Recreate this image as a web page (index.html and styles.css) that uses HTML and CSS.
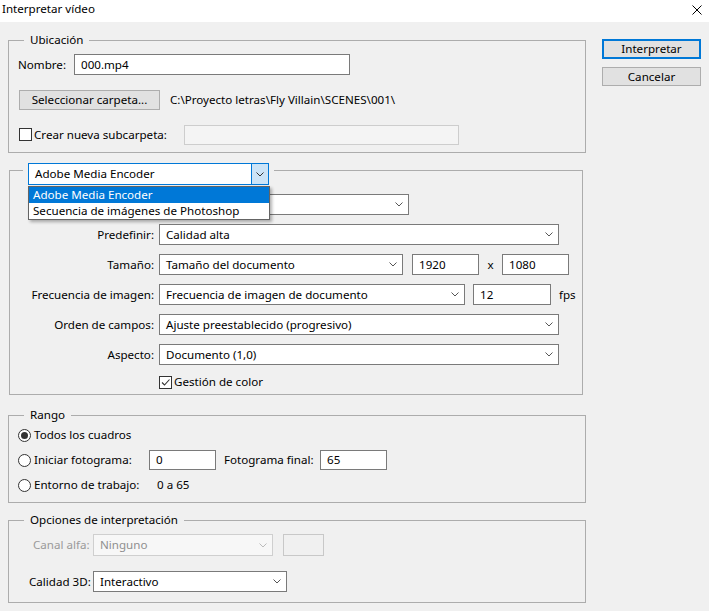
FILE: index.html
```html
<!DOCTYPE html>
<html lang="es">
<head>
<meta charset="utf-8">
<title>Interpretar vídeo</title>
<link rel="stylesheet" href="styles.css">
</head>
<body>
<div class="titlebar">
  <span class="title">Interpretar vídeo</span>
  <svg class="close" viewBox="0 0 10 10" width="10" height="10"><path d="M0.5 0.5 L9.5 9.5 M9.5 0.5 L0.5 9.5" stroke="#000" stroke-width="1" fill="none"/></svg>
</div>
<div class="dialog">
  <div class="main">
    <fieldset class="group g-ubic">
      <legend>Ubicación</legend>
      <div class="row">
        <span class="lbl-nombre">Nombre:</span>
        <div class="input w-nombre">000.mp4</div>
      </div>
      <div class="row gap-row">
        <button class="btn btn-folder" type="button">Seleccionar carpeta...</button>
        <span class="path">C:\Proyecto letras\Fly Villain\SCENES\001\</span>
      </div>
      <div class="row gap-row">
        <span class="check check-sub"></span>
        <span class="lbl-sub">Crear nueva subcarpeta:</span>
        <div class="input disabled w-sub"></div>
      </div>
    </fieldset>

    <div class="group g-video">
      <div class="combo-wrap">
        <div class="combo">
          <span class="combo-text">Adobe Media Encoder</span>
          <span class="combo-arrow"><svg class="chev" viewBox="0 0 8 5" width="8" height="5"><path d="M0.5 0.5 L4 4 L7.5 0.5" stroke="#333" fill="none"/></svg></span>
        </div>
        <ul class="dropdown">
          <li class="sel">Adobe Media Encoder</li>
          <li>Secuencia de imágenes de Photoshop</li>
        </ul>
      </div>
      <div class="vgrid">
        <span class="vlbl"></span>
        <div class="field"><div class="select w-format"><span></span><svg class="chev" viewBox="0 0 8 5" width="8" height="5"><path d="M0.5 0.5 L4 4 L7.5 0.5" stroke="#555" fill="none"/></svg></div></div>

        <span class="vlbl">Predefinir:</span>
        <div class="field"><div class="select w-full"><span>Calidad alta</span><svg class="chev" viewBox="0 0 8 5" width="8" height="5"><path d="M0.5 0.5 L4 4 L7.5 0.5" stroke="#555" fill="none"/></svg></div></div>

        <span class="vlbl">Tamaño:</span>
        <div class="field">
          <div class="select w-size"><span>Tamaño del documento</span><svg class="chev" viewBox="0 0 8 5" width="8" height="5"><path d="M0.5 0.5 L4 4 L7.5 0.5" stroke="#555" fill="none"/></svg></div>
          <div class="input w-dim dim-first">1920</div>
          <span class="times">x</span>
          <div class="input w-dim">1080</div>
        </div>

        <span class="vlbl">Frecuencia de imagen:</span>
        <div class="field">
          <div class="select w-rate"><span>Frecuencia de imagen de documento</span><svg class="chev" viewBox="0 0 8 5" width="8" height="5"><path d="M0.5 0.5 L4 4 L7.5 0.5" stroke="#555" fill="none"/></svg></div>
          <div class="input w-fps">12</div>
          <span class="fps">fps</span>
        </div>

        <span class="vlbl">Orden de campos:</span>
        <div class="field"><div class="select w-full"><span>Ajuste preestablecido (progresivo)</span><svg class="chev" viewBox="0 0 8 5" width="8" height="5"><path d="M0.5 0.5 L4 4 L7.5 0.5" stroke="#555" fill="none"/></svg></div></div>

        <span class="vlbl">Aspecto:</span>
        <div class="field"><div class="select w-full"><span>Documento (1,0)</span><svg class="chev" viewBox="0 0 8 5" width="8" height="5"><path d="M0.5 0.5 L4 4 L7.5 0.5" stroke="#555" fill="none"/></svg></div></div>

        <span></span>
        <div class="field">
          <span class="check checked"><svg viewBox="0 0 11 11" width="11" height="11"><path d="M2 5.5 L4.5 8 L9.5 2.5" stroke="#333" stroke-width="1.1" fill="none"/></svg></span>
          <span class="check-lbl">Gestión de color</span>
        </div>
      </div>
    </div>

    <fieldset class="group g-rango">
      <legend>Rango</legend>
      <div class="rrow">
        <span class="radio on"></span>
        <span class="rlbl">Todos los cuadros</span>
      </div>
      <div class="rrow">
        <span class="radio"></span>
        <span class="rlbl w-ini">Iniciar fotograma:</span>
        <div class="input w-dim h20">0</div>
        <span class="lbl-final">Fotograma final:</span>
        <div class="input w-dim h20">65</div>
      </div>
      <div class="rrow">
        <span class="radio"></span>
        <span class="rlbl w-ent">Entorno de trabajo:</span>
        <span>0 a 65</span>
      </div>
    </fieldset>

    <fieldset class="group g-opc">
      <legend>Opciones de interpretación</legend>
      <div class="ogrid">
        <span class="olbl dis lbl-alfa">Canal alfa:</span>
        <div class="field">
          <div class="select disabled w-alfa"><span>Ninguno</span><svg class="chev" viewBox="0 0 8 5" width="8" height="5"><path d="M0.5 0.5 L4 4 L7.5 0.5" stroke="#bbb" fill="none"/></svg></div>
          <div class="swatch"></div>
        </div>
        <span class="olbl lbl-3d">Calidad 3D:</span>
        <div class="field"><div class="select w-3d"><span>Interactivo</span><svg class="chev" viewBox="0 0 8 5" width="8" height="5"><path d="M0.5 0.5 L4 4 L7.5 0.5" stroke="#555" fill="none"/></svg></div></div>
      </div>
    </fieldset>
  </div>

  <div class="side">
    <button class="btn btn-side btn-primary" type="button">Interpretar</button>
    <button class="btn btn-side btn-cancel" type="button">Cancelar</button>
  </div>
</div>
</body>
</html>
```

FILE: styles.css
```css
html, body {
  margin: 0;
  padding: 0;
}
body {
  width: 709px;
  height: 611px;
  overflow: hidden;
  background: #f0f0f0;
  font-family: "Noto Sans", "Open Sans", sans-serif;
  font-size: 11.6px;
  line-height: 16px;
  color: #000;
}

/* title bar */
.titlebar {
  height: 22px;
  background: #fff;
  display: flex;
  justify-content: space-between;
  align-items: flex-start;
}
.title {
  padding-left: 2px;
  line-height: 17px;
}
.close {
  margin: 5px 7px 0 0;
  display: block;
}

/* layout */
.dialog {
  display: flex;
  padding-top: 10px;
}
.main {
  margin-left: 8px;
  width: 578px;
  display: flex;
  flex-direction: column;
}
.side {
  margin-left: 16px;
  margin-top: 7px;
  display: flex;
  flex-direction: column;
  gap: 8px;
}

/* group boxes */
fieldset.group {
  margin: 0;
  min-width: 0;
  border: 1px solid #acacac;
  box-sizing: border-box;
}
fieldset.group legend {
  margin-left: 6px;
  padding: 0 6px;
  line-height: 16px;
  height: 16px;
}
.g-ubic {
  padding: 6px 8px 7px 9px;
}
.g-rango {
  margin-top: 12px !important;
  padding: 2px 8px 7px 9px;
}
.g-opc {
  margin-top: 9px !important;
  padding: 6px 8px 10px 9px;
}
.g-opc legend {
  margin-left: 4px;
}

.row {
  display: flex;
  align-items: center;
  height: 21px;
}
.gap-row {
  margin-top: 14px;
}
.lbl-nombre {
  width: 56px;
}
.lbl-sub {
  width: 150px;
  margin-left: 2px;
}
.path {
  margin-left: 10px;
}

/* controls */
.input {
  box-sizing: border-box;
  height: 21px;
  border: 1px solid #7a7a7a;
  background: #fff;
  padding-left: 6px;
  display: flex;
  align-items: center;
  white-space: nowrap;
}
.input.disabled {
  background: #f4f4f4;
  border-color: #cdcdcd;
  height: 20px;
}
.h20 {
  height: 20px;
}
.w-nombre { width: 276px; }
.w-sub { width: 275px; }
.w-dim { width: 67px; }
.w-fps { width: 78px; margin-left: 8px; }
.dim-first { margin-left: 9px; }
.times {
  width: 23px;
  text-align: center;
}
.fps {
  margin-left: 8px;
}

.select {
  box-sizing: border-box;
  height: 21px;
  border: 1px solid #7a7a7a;
  background: #fff;
  display: flex;
  align-items: center;
  justify-content: space-between;
  padding: 0 5px 0 6px;
  white-space: nowrap;
}
.select.disabled {
  background: #f7f7f7;
  border-color: #cfcfcf;
  color: #8f8f8f;
  height: 22px;
}
.chev {
  display: block;
  flex: none;
}
.w-format { width: 250px; }
.w-full { width: 400px; }
.w-size { width: 244px; }
.w-rate { width: 306px; }
.w-alfa { width: 180px; }
.w-3d { width: 194px; }

.swatch {
  box-sizing: border-box;
  width: 41px;
  height: 22px;
  margin-left: 10px;
  border: 1px solid #c8c8c8;
  background: #f0f0f0;
}

.btn {
  box-sizing: border-box;
  height: 20px;
  margin: 0;
  padding: 0;
  border: 1px solid #adadad;
  background: #e1e1e1;
  font: inherit;
  color: #000;
}
.btn-folder {
  width: 141px;
  margin-left: 1px;
}
.btn-side {
  width: 99px;
}
.btn-primary {
  border: 2px solid #0078d7;
}
.btn-cancel {
  height: 19px;
}

.check {
  box-sizing: border-box;
  width: 13px;
  height: 13px;
  border: 1px solid #333;
  background: #fff;
  display: flex;
  align-items: center;
  justify-content: center;
  flex: none;
}
.check svg {
  display: block;
}
.check-sub {
  margin-left: 1px;
}
.check-lbl {
  margin-left: 2px;
}

/* video group */
.g-video {
  margin-top: 17px;
  margin-left: 1px;
  width: 574px;
  box-sizing: border-box;
  border: 1px solid #acacac;
  padding-bottom: 4px;
}
.combo-wrap {
  position: relative;
  width: max-content;
  margin: -8px 0 0 13px;
  padding: 0 5px;
  background: #f0f0f0;
}
.combo {
  box-sizing: border-box;
  width: 241px;
  height: 22px;
  border: 1px solid #0078d7;
  background: #fff;
  display: flex;
  align-items: stretch;
}
.combo-text {
  flex: 1;
  padding-left: 6px;
  display: flex;
  align-items: center;
}
.combo-arrow {
  width: 17px;
  box-sizing: border-box;
  background: #cce4f7;
  border-left: 1px solid #0078d7;
  display: flex;
  align-items: center;
  justify-content: center;
}
.dropdown {
  position: absolute;
  left: 5px;
  top: 23px;
  z-index: 2;
  box-sizing: border-box;
  width: 242px;
  margin: 0;
  padding: 0;
  list-style: none;
  border: 1px solid #646464;
  background: #fff;
  box-shadow: 2px 2px 3px rgba(0, 0, 0, 0.3);
}
.dropdown li {
  height: 16px;
  line-height: 16px;
  padding-left: 4px;
  white-space: nowrap;
}
.dropdown li.sel {
  background: #0078d7;
  color: #fff;
}

.vgrid {
  display: grid;
  grid-template-columns: 144px auto;
  grid-template-rows: repeat(6, 21px) 16px;
  column-gap: 5px;
  row-gap: 9px;
  margin-top: 9px;
}
.vlbl {
  text-align: right;
  align-self: center;
  white-space: nowrap;
}
.field {
  display: flex;
  align-items: center;
}

/* range */
.rrow {
  display: flex;
  align-items: center;
  height: 20px;
}
.rrow + .rrow {
  margin-top: 5px;
}
.radio {
  box-sizing: border-box;
  width: 13px;
  height: 13px;
  border: 1px solid #333;
  border-radius: 50%;
  background: #fff;
  flex: none;
  display: flex;
  align-items: center;
  justify-content: center;
}
.radio.on::after {
  content: "";
  width: 7px;
  height: 7px;
  border-radius: 50%;
  background: #333;
}
.rlbl {
  margin-left: 3px;
  white-space: nowrap;
}
.w-ini { width: 115px; }
.w-ent { width: 123px; }
.lbl-final {
  margin-left: 8px;
  width: 96px;
}

/* options */
.ogrid {
  display: grid;
  grid-template-columns: 75px auto;
  grid-template-rows: 22px 21px;
  row-gap: 15px;
}
.olbl {
  align-self: center;
  white-space: nowrap;
}
.olbl.dis {
  color: #9a9a9a;
}
.lbl-alfa { padding-left: 15px; }
.lbl-3d { padding-left: 11px; }
```
